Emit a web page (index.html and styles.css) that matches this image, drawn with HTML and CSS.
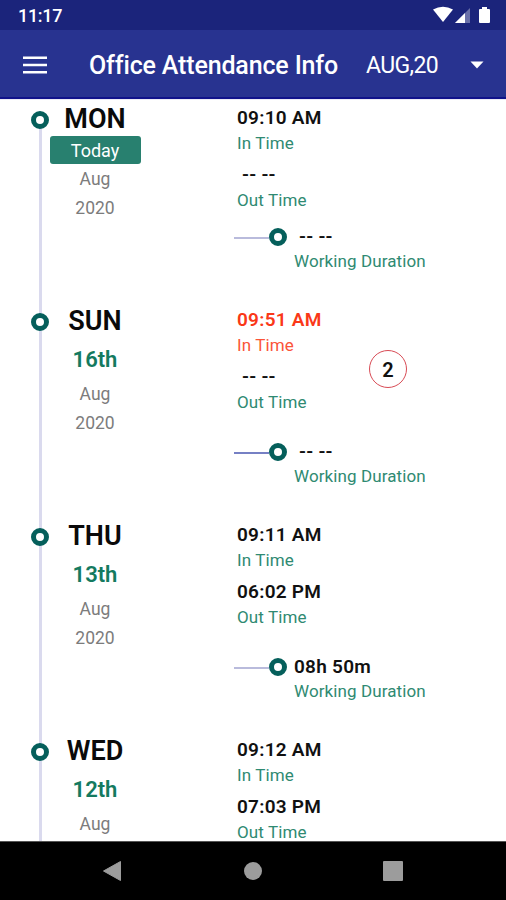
FILE: index.html
```html
<!DOCTYPE html>
<html lang="en">
<head>
<meta charset="utf-8">
<title>Office Attendance Info</title>
<link rel="stylesheet" href="styles.css">
</head>
<body>
<div class="screen">
  <div class="status">
    <span class="clock">11:17</span>
    <svg class="status-icons" width="58" height="20" viewBox="0 0 58 20">
      <path d="M0 4.500Q10 -1 20 4.500L10 17Z" fill="#fff"/>
      <path d="M37 3V18H22Z" fill="#fff" opacity=".35"/>
      <path d="M32 8V18H22Z" fill="#fff"/>
      <path d="M49 2h5v2h2q1 0 1 1v12q0 1-1 1h-9q-1 0-1-1V5q0-1 1-1h2Z" fill="#fff"/>
    </svg>
  </div>
  <header class="bar">
    <svg class="menu" width="24" height="18" viewBox="0 0 24 18"><path d="M0 1.700h24M0 9h24M0 16.300h24" stroke="#fff" stroke-width="2.500"/></svg>
    <h1 class="title">Office Attendance Info</h1>
    <span class="month">AUG,20</span>
    <svg class="caret" width="14" height="8" viewBox="0 0 14 8"><path d="M.5 .5h13L7 7.500Z" fill="#fff"/></svg>
  </header>
  <main class="list">
    <section class="entry today">
      <div class="rail"><i class="ring"></i></div>
      <div class="date"><b class="day">MON</b><span class="chip">Today</span><span class="sub">Aug</span><span class="sub">2020</span></div>
      <div class="times">
        <b class="time">09:10 AM</b><span class="label">In Time</span>
        <b class="time empty">-- --</b><span class="label">Out Time</span>
        <div class="duration"><i class="dash"></i><i class="ring"></i><b class="time empty">-- --</b></div>
        <span class="label total">Working Duration</span>
      </div>
    </section>
    <section class="entry">
      <div class="rail"><i class="ring"></i></div>
      <div class="date"><b class="day">SUN</b><span class="nth">16th</span><span class="sub">Aug</span><span class="sub">2020</span></div>
      <div class="times">
        <b class="time late">09:51 AM</b><span class="label late">In Time</span>
        <b class="time empty">-- --</b><span class="label">Out Time</span>
        <div class="duration"><i class="dash thin"></i><i class="ring"></i><b class="time empty">-- --</b></div>
        <span class="label total">Working Duration</span>
      </div>
      <span class="badge">2</span>
    </section>
    <section class="entry">
      <div class="rail"><i class="ring"></i></div>
      <div class="date"><b class="day">THU</b><span class="nth">13th</span><span class="sub">Aug</span><span class="sub">2020</span></div>
      <div class="times">
        <b class="time">09:11 AM</b><span class="label">In Time</span>
        <b class="time">06:02 PM</b><span class="label">Out Time</span>
        <div class="duration"><i class="dash"></i><i class="ring"></i><b class="time">08h 50m</b></div>
        <span class="label total">Working Duration</span>
      </div>
    </section>
    <section class="entry">
      <div class="rail"><i class="ring"></i></div>
      <div class="date"><b class="day">WED</b><span class="nth">12th</span><span class="sub">Aug</span></div>
      <div class="times">
        <b class="time">09:12 AM</b><span class="label">In Time</span>
        <b class="time">07:03 PM</b><span class="label">Out Time</span>
      </div>
    </section>
  </main>
  <nav class="nav">
    <svg width="20" height="22" viewBox="0 0 20 22"><path d="M18.500 1.500V20.500L1.500 11Z" fill="#9c9c9c" stroke="#9c9c9c" stroke-linejoin="round"/></svg>
    <i class="home"></i>
    <i class="recent"></i>
  </nav>
</div>
</body>
</html>
```

FILE: styles.css
```css
* { box-sizing: border-box; }
body { margin: 0; font-family: Roboto, "Liberation Sans", sans-serif; background: #fff; }
.screen { width: 506px; height: 900px; display: flex; flex-direction: column; overflow: hidden; }
.status { flex: none; height: 30px; background: #1b247b; color: #fff; display: flex; justify-content: space-between; padding: 5px 15px 0 18px; }
.clock { font-size: 18px; font-weight: 500; line-height: 22px; letter-spacing: -.3px; }
.status-icons { display: block; }
.bar { flex: none; height: 69px; background: #283390; border-bottom: 2px solid #10128a; color: #fff; display: flex; align-items: center; padding: 2px 22px 0 23px; }
.title { margin: 2px 0 0 42px; width: 277px; font-size: 25px; font-weight: 500; letter-spacing: -.15px; white-space: nowrap; }
.month { flex: 1; margin-top: 2px; font-size: 23px; letter-spacing: -.6px; white-space: nowrap; }
.list { flex: 1; min-height: 0; overflow: hidden; background: #fff; border-top: 1px solid #ebebf5; }
.entry { height: 215px; display: flex; position: relative; }
.today { height: 202px; }
.rail { width: 49px; padding: 11px 0 0 31px; background: linear-gradient(#dadaee, #dadaee) 39px 0 / 3px 100% no-repeat; }
.today .rail { background-position: 39px 20px; }
.ring { flex: none; display: block; width: 18px; height: 18px; border: 5px solid #055f5b; border-radius: 50%; background: #fff; }
.date { width: 92px; display: flex; flex-direction: column; align-items: center; }
.day { font-size: 27px; font-weight: 600; line-height: 36px; height: 36px; color: #0a0a0a; padding-top: 1px; }
.chip { width: 91px; height: 28px; border-radius: 3px; background: #28806f; color: #fff; font-size: 18px; line-height: 29px; text-align: center; margin-bottom: 1px; }
.nth { font-size: 22px; font-weight: 600; line-height: 30px; margin: 7px 0 5px; color: #147a60; }
.sub { font-size: 17.5px; line-height: 28.5px; color: #7c7c7c; }
.times { margin-left: 96px; display: flex; flex-direction: column; }
.time { font-size: 19px; font-weight: 600; line-height: 28px; letter-spacing: .25px; color: #111; white-space: pre; padding-top: 4px; height: 32px; }
.label { font-size: 17px; line-height: 22px; letter-spacing: .1px; color: #2f8a72; white-space: nowrap; }
.label + .time { padding-top: 7px; height: 35px; }
.time.empty { padding-left: 5px; }
.late { color: #fa3818; }
.label.late { color: #fb5438; }
.duration { display: flex; align-items: center; height: 28px; margin: 25px 0 0 -3px; }
.duration .time { padding-top: 0; height: 28px; line-height: 27px; margin-left: 7px; }
.duration .time.empty { line-height: 28px; }
.today .duration { margin-top: 12px; }
.dash { width: 35px; height: 2px; margin-top: 2px; background: #b9bbdc; }
.dash.thin { background: #7680c4; }
.total { margin: -1px 0 0 57px; }
.badge { position: absolute; left: 369px; top: 48px; width: 38px; height: 38px; border: 1px solid #d84b55; border-radius: 50%; text-align: center; font-size: 20px; line-height: 38px; font-weight: 600; color: #111; }
.nav { flex: none; height: 59px; background: #000; border-top: 1px solid #555; display: flex; align-items: center; padding-left: 102px; }
.home { width: 18px; height: 18px; border-radius: 50%; background: #9c9c9c; margin-left: 122px; }
.recent { width: 20px; height: 20px; border-radius: 1px; background: #9c9c9c; margin-left: 121px; }
```
